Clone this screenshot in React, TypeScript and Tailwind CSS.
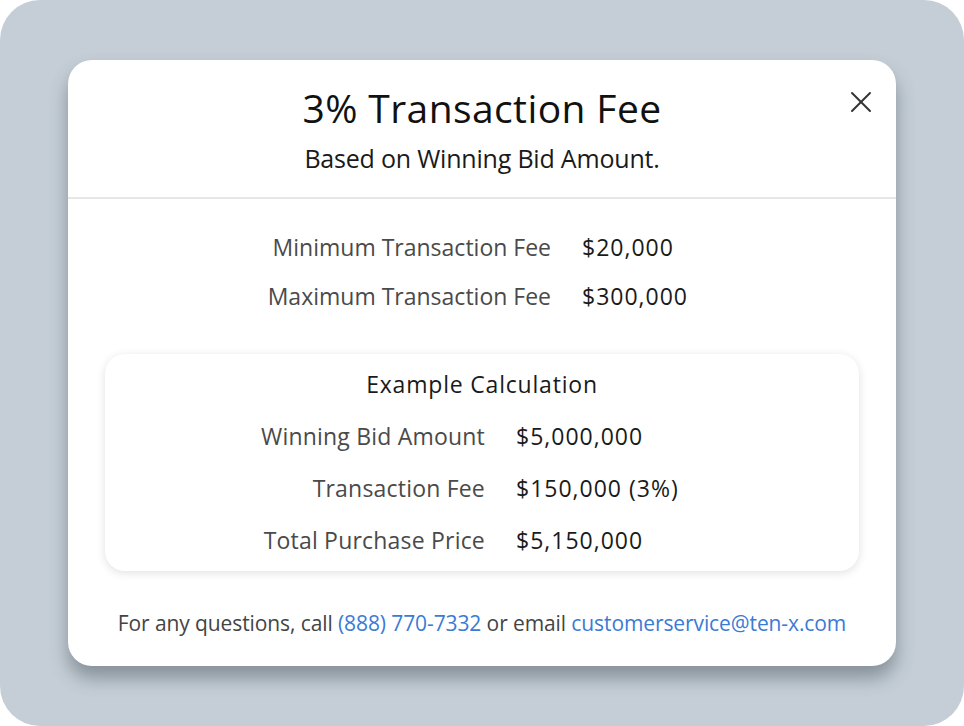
import React from 'react';
import { X } from 'lucide-react';

interface FeeRow {
  label: string;
  value: string;
}

const limits: FeeRow[] = [
  { label: 'Minimum Transaction Fee', value: '$20,000' },
  { label: 'Maximum Transaction Fee', value: '$300,000' },
];

const example: FeeRow[] = [
  { label: 'Winning Bid Amount', value: '$5,000,000' },
  { label: 'Transaction Fee', value: '$150,000 (3%)' },
  { label: 'Total Purchase Price', value: '$5,150,000' },
];

const App: React.FC = () => {
  return (
    <div className="w-[964px] h-[726px] bg-white font-['Open_Sans',sans-serif]">
      <div className="h-full rounded-[40px] bg-[#c5ced6] pt-[60px] pl-[68px]">
        <div className="relative w-[828px] h-[606px] rounded-[24px] bg-white shadow-[0_12px_18px_rgba(60,70,80,0.45)] flex flex-col">
          <button className="absolute right-[17px] top-[24px] text-[#333]">
            <X size={36} strokeWidth={1.3} />
          </button>

          <div className="pt-[24px] pb-[23px] text-center border-b-2 border-[#e6e6e6]">
            <h1 className="text-[39px] leading-[48px] text-[#111] tracking-[0.4px]">3% Transaction Fee</h1>
            <p className="mt-[10px] text-[25px] leading-[32px] font-medium text-[#1a1a1a] tracking-[-0.2px]">
              Based on Winning Bid Amount.
            </p>
          </div>

          <div className="mt-[32px] grid grid-cols-[483px_1fr] gap-x-[31px] gap-y-[17px] text-[23px] leading-[32px]">
            {limits.map((row) => (
              <React.Fragment key={row.label}>
                <span className="text-right text-[#4a4a4a]">{row.label}</span>
                <span className="font-medium text-[#1a1a1a] tracking-[1px]">{row.value}</span>
              </React.Fragment>
            ))}
          </div>

          <div className="mx-[37px] mt-[42px] rounded-[20px] bg-white shadow-[0_2px_10px_rgba(0,0,0,0.12)] pt-[14px] pb-[15px]">
            <h2 className="text-center text-[23px] leading-[32px] font-medium text-[#1a1a1a] tracking-[0.8px]">
              Example Calculation
            </h2>
            <div className="mt-[20px] grid grid-cols-[380px_1fr] gap-x-[31px] gap-y-[20px] text-[23px] leading-[32px]">
              {example.map((row) => (
                <React.Fragment key={row.label}>
                  <span className="text-right text-[#4a4a4a] tracking-[0.2px]">{row.label}</span>
                  <span className="font-medium text-[#1a1a1a] tracking-[1px]">{row.value}</span>
                </React.Fragment>
              ))}
            </div>
          </div>

          <p className="mt-[38px] text-center text-[21px] leading-[28px] text-[#444] tracking-[-0.1px]">
            For any questions, call <a className="text-[#3a7bd5]">(888) 770-7332</a> or email{' '}
            <a className="text-[#3a7bd5]">customerservice@ten-x.com</a>
          </p>
        </div>
      </div>
    </div>
  );
};

export default App;
